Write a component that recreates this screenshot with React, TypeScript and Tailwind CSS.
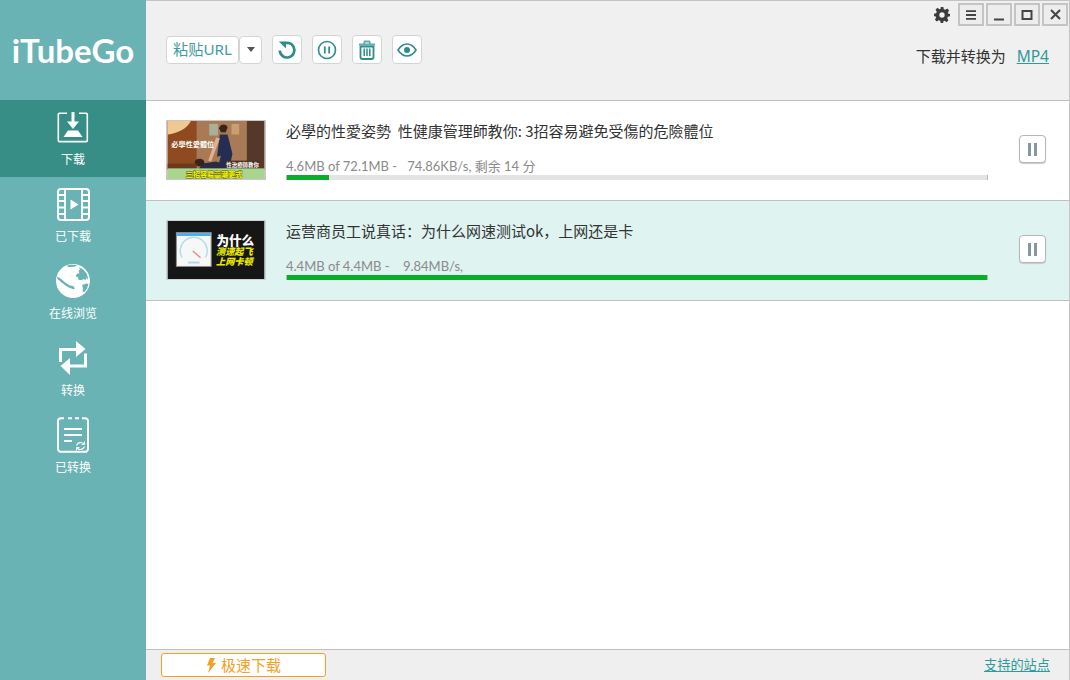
import React from "react";

const CJK = '"Noto Sans CJK SC", sans-serif';

function DownloadIcon() {
  return (
    <svg width="32" height="31" viewBox="0 0 32 31" fill="none">
      <path d="M10 1.200H2.500a1.200 1.200 0 0 0-1.200 1.200v26a1.200 1.200 0 0 0 1.200 1.200h26.600a1.200 1.200 0 0 0 1.200-1.200v-26a1.200 1.200 0 0 0-1.200-1.200H22" stroke="white" strokeWidth="1.600" />
      <path d="M14.500 0h3v9.500h4.500L16 17l-6-7.500h4.500z" fill="white" />
      <path d="M11 18.500h10l4.500 6.500h-19z" fill="white" />
    </svg>
  );
}

function FilmIcon() {
  return (
    <svg width="33" height="33" viewBox="0 0 33 33" fill="none">
      <rect x="1" y="1" width="31" height="31" rx="3" stroke="white" strokeWidth="2" />
      <path d="M8 1v31M25 1v31" stroke="white" strokeWidth="1.800" />
      <path d="M1 7h7M1 13h7M1 19.500h7M1 26h7M25 7h7M25 13h7M25 19.500h7M25 26h7" stroke="white" strokeWidth="1.800" />
      <path d="M13.500 11.500l8 5-8 5z" fill="white" />
    </svg>
  );
}

function GlobeIcon() {
  return (
    <svg width="34" height="34" viewBox="0 0 34 34">
      <circle cx="17" cy="17" r="17" fill="white" />
      <path d="M11 1.500l4-.8 6 .3-1.500 1.500-2.500.2-2 .3-2.500.3z" fill="#69b3b5" />
      <path d="M23 3.500l4 1.800 3.500 4 1.500 4.500-.5 2-1-2.500-.5 2.500-3-.5-1.500 1-3-.5-.5-2.500-2.500-1 1.500-2.500 2.500-.5-1-2.500 1.500-1z" fill="#69b3b5" />
      <path d="M.8 13l2.500.5 3 2.500 3.500 3 4 2.500 3.500.5 1.500 2.500-1 .8-4-1.300-4-2.300-4.500-3.500-3.500-3z" fill="#69b3b5" />
      <path d="M26 21l4.500-1.500 2 .5-1.500 4.500-2.500 3.500-2-.5.500-3.500z" fill="#69b3b5" />
    </svg>
  );
}

function ConvertIcon() {
  return (
    <svg width="28" height="36" viewBox="0 0 28 36" fill="none">
      <path d="M1.500 22V9.500h16" stroke="white" strokeWidth="3" />
      <path d="M17 1l9.500 8L17 17z" fill="white" />
      <path d="M26.500 13.500V26H10" stroke="white" strokeWidth="3" />
      <path d="M11 18L1.500 26l9.500 9z" fill="white" />
    </svg>
  );
}

function ConvertedIcon() {
  return (
    <svg width="32" height="36" viewBox="0 0 32 36" fill="none">
      <path d="M7 1.200H4a3 3 0 0 0-3 3v27.600a3 3 0 0 0 3 3h24a3 3 0 0 0 3-3V4.200a3 3 0 0 0-3-3h-3" stroke="white" strokeWidth="2" />
      <path d="M11 1.200h4M18 1.200h4" stroke="white" strokeWidth="2" />
      <path d="M7 12h18M7 18h18M7 24h8" stroke="white" strokeWidth="2" />
      <path d="M19.500 28.500a4.500 4.500 0 0 1 7.500-1.500M27.500 29.500a4.500 4.500 0 0 1-7.500 1.500" stroke="white" strokeWidth="1.100" />
      <path d="M27.500 24.500v3h-3M19.500 33.500v-3h3" stroke="white" strokeWidth="1" />
    </svg>
  );
}

function Nav({ label, active, children }: { label: string; active?: boolean; children: React.ReactNode }) {
  return (
    <div className={`flex h-[77px] flex-col items-center pt-[9px] ${active ? "bg-[#378e86]" : ""}`}>
      <div className="flex h-[36px] items-center justify-center">{children}</div>
      <div className="mt-[5px] text-[12px] leading-[18px] text-white" style={{ fontFamily: CJK }}>{label}</div>
    </div>
  );
}

function ToolButton({ children }: { children: React.ReactNode }) {
  return (
    <div className="flex h-[29px] w-[30px] items-center justify-center rounded-[4px] border border-[#d4d4d4] bg-white">
      {children}
    </div>
  );
}

function WinButton({ children }: { children: React.ReactNode }) {
  return (
    <div className="flex h-[23px] w-[26px] items-center justify-center border-2 border-[#c4c4c4] bg-[#ededed]">
      {children}
    </div>
  );
}

function Thumb1() {
  return (
    <svg width="100" height="60" viewBox="0 0 100 60" className="mb-[1px] shrink-0 border border-[#c8c8c8]">
      <rect width="100" height="60" fill="#8a5a34" />
      <rect width="30" height="50" fill="#8f4a20" />
      <path d="M0 0h24C20 8 10 13 0 14z" fill="#f0c890" />
      <rect x="30" width="52" height="50" fill="#a87a55" />
      <rect x="82" width="18" height="50" fill="#55382a" />
      <rect x="43" y="3" width="9" height="12" fill="#a8b09a" />
      <rect x="66" y="3" width="8" height="11" fill="#c8a070" />
      <circle cx="57" cy="8" r="4" fill="#e8b890" />
      <path d="M53 8c0-5 8-6 9-1l-2 5h-5z" fill="#3a2418" />
      <path d="M54 14h8l5 20-3 14H52l3-12-4 1z" fill="#232e52" />
      <path d="M54 18l-9 24-3-1 8-24z" fill="#e0b090" />
      <path d="M36 44l14-2 12 4v4H32z" fill="#2a2c44" />
      <ellipse cx="33" cy="43" rx="5" ry="4" fill="#33241e" />
      <rect y="44" width="30" height="6" fill="#6a3a1c" />
      <rect x="60" y="41" width="35" height="9" fill="#4a3020" />
      <text x="77.500" y="47.500" textAnchor="middle" fontSize="5.600" fontWeight="700" fill="#fff" fontFamily={CJK}>性治療師教你</text>
      <text x="26" y="26.500" textAnchor="middle" fontSize="7.400" fontWeight="700" fill="#fff" fontFamily={CJK}>必學性愛體位</text>
      <rect y="49" width="100" height="11" fill="#a9d68f" />
      <text x="48" y="58" textAnchor="middle" fontSize="7.300" fontWeight="900" fill="#eeec00" stroke="#5a5a10" strokeWidth="0.800" paintOrder="stroke" fontFamily={CJK}>三招容易高潮更式</text>
    </svg>
  );
}

function Thumb2() {
  return (
    <svg width="100" height="60" viewBox="0 0 100 60" className="mb-[1px] shrink-0 border border-[#c8d4d4]">
      <rect width="100" height="60" fill="#161616" />
      <rect x="9" y="12" width="36" height="35" fill="#f6f8f8" stroke="#8c8c8c" />
      <rect x="9.500" y="12.500" width="35" height="3" fill="#49b0e8" />
      <path d="M15 38a14 14 0 1 1 24 0" fill="none" stroke="#b5dde8" strokeWidth="1.500" />
      <path d="M26 31l8 7" stroke="#e88" strokeWidth="1.500" />
      <rect x="21" y="42" width="12" height="2" fill="#b5d5e8" />
      <text x="70" y="24.500" textAnchor="middle" fontSize="13" fontWeight="900" fill="#fff" fontFamily={CJK}>为什么</text>
      <text x="69" y="35" textAnchor="middle" fontSize="9.500" fontWeight="900" fontStyle="italic" fill="#e8e800" fontFamily={CJK}>测速起飞</text>
      <text x="69" y="46" textAnchor="middle" fontSize="9.500" fontWeight="900" fontStyle="italic" fill="#e8e800" fontFamily={CJK}>上网卡顿</text>
    </svg>
  );
}

function Row({ title, stats, pct, thumb, tint }: { title: string; stats: React.ReactNode; pct: string; thumb: React.ReactNode; tint?: boolean }) {
  return (
    <div className={`flex h-[100px] items-center border-b border-[#c0c0c0] pl-[20px] ${tint ? "bg-[#dff3f1]" : "bg-white"}`}>
      {thumb}
      <div className="ml-[20px] w-[702px]">
        <div className="whitespace-pre text-[15px] leading-[20px] text-[#333]" style={{ fontFamily: CJK }}>{title}</div>
        <div className="mt-[17px] whitespace-pre text-[13px] leading-[16px] text-[#8a8a8a]" style={{ fontFamily: 'Lato, "Noto Sans CJK SC", sans-serif' }}>{stats}</div>
        <div className="mt-[1px] flex h-[5px] border-x border-[#b8b8b8] bg-[#e4e4e4]">
          <div className="h-full bg-[#08ad29]" style={{ width: pct }} />
        </div>
      </div>
      <div className="ml-[31px] mb-[3px] flex h-[28px] w-[27px] items-center justify-center gap-[3px] rounded-[4px] border border-[#b4b8bc] bg-white shadow-[0_1px_1px_#c8c8c8]">
        <div className="h-[13px] w-[3px] bg-[#87979f]" />
        <div className="h-[13px] w-[3px] bg-[#87979f]" />
      </div>
    </div>
  );
}

export default function App() {
  return (
    <div className="flex h-[680px] w-[1070px] overflow-hidden bg-white">
      <aside className="w-[146px] shrink-0 bg-[#69b3b5]">
        <div className="flex h-[100px] items-center justify-center pt-[2px] text-[33px] font-bold text-white" style={{ fontFamily: 'Lato, sans-serif' }}>iTubeGo</div>
        <Nav label="下载" active><DownloadIcon /></Nav>
        <Nav label="已下载"><FilmIcon /></Nav>
        <Nav label="在线浏览"><GlobeIcon /></Nav>
        <Nav label="转换"><ConvertIcon /></Nav>
        <Nav label="已转换"><ConvertedIcon /></Nav>
      </aside>

      <main className="flex min-w-0 flex-1 flex-col border-t border-r border-[#c4c4c4]">
        <header className="flex h-[100px] shrink-0 flex-col border-b border-[#c0c0c0] bg-[#f0f0f0]">
          <div className="flex items-center justify-end gap-[2px] pt-[2px] pr-[1px]">
            <svg width="16" height="16" viewBox="0 0 24 24" className="mr-[6px]" fill="#3c3c3c">
              <path fillRule="evenodd" d="M10 0h4l.7 3.300 2.300 1 2.900-1.900 2.800 2.800-1.900 2.900 1 2.300L24 10v4l-3.200.7-1 2.300 1.900 2.900-2.800 2.800-2.900-1.900-2.300 1L14 24h-4l-.7-3.200-2.300-1-2.900 1.900-2.800-2.800L3.200 16l-1-2.300L0 14v-4l3.200-.7 1-2.300-1.900-2.900 2.800-2.800 2.900 1.900 2.300-1zM12 8a4 4 0 1 0 0 8 4 4 0 0 0 0-8z" />
            </svg>
            <WinButton>
              <svg width="12" height="10" viewBox="0 0 12 10" fill="none" stroke="#444" strokeWidth="1.800"><path d="M1 1.200h10M1 5h10M1 8.800h10" /></svg>
            </WinButton>
            <WinButton>
              <svg width="12" height="12" viewBox="0 0 12 12" fill="none" stroke="#444" strokeWidth="2"><path d="M1 10.500h10" /></svg>
            </WinButton>
            <WinButton>
              <svg width="12" height="10" viewBox="0 0 12 10" fill="none" stroke="#444" strokeWidth="2"><rect x="1.500" y="1" width="9" height="8" /></svg>
            </WinButton>
            <WinButton>
              <svg width="11" height="11" viewBox="0 0 11 11" fill="none" stroke="#444" strokeWidth="2"><path d="M1 1l9 9M10 1l-9 9" /></svg>
            </WinButton>
          </div>
          <div className="mt-[9px] flex h-[29px] items-center pl-[20px] pr-[20px]">
            <div className="flex h-[28px] w-[73px] items-center justify-center rounded-[4px] border border-[#d4d4d4] bg-white text-[15.200px] text-[#3f9ba3]" style={{ fontFamily: '"Noto Sans", "Noto Sans CJK SC", sans-serif' }}>粘贴URL</div>
            <div className="flex h-[28px] w-[23px] items-center justify-center rounded-[4px] border border-[#d4d4d4] bg-white">
              <svg width="8" height="5" viewBox="0 0 8 5"><path d="M0 0h8L4 5z" fill="#555" /></svg>
            </div>
            <div className="ml-[10px] flex gap-[10px]">
              <ToolButton>
                <svg width="20" height="20" viewBox="0 0 20 20" fill="none">
                  <path d="M5.500 4.500A7.300 7.300 0 1 1 2.800 10.500" stroke="#2f8d88" strokeWidth="2.700" />
                  <path d="M1.800 1.500h7.200V8.500z" fill="#2f8d88" />
                </svg>
              </ToolButton>
              <ToolButton>
                <svg width="20" height="20" viewBox="0 0 20 20" fill="none">
                  <circle cx="10" cy="10" r="8.500" stroke="#2f8d88" strokeWidth="1.600" />
                  <path d="M7.800 6.500v7M12.200 6.500v7" stroke="#2f8d88" strokeWidth="1.800" />
                </svg>
              </ToolButton>
              <ToolButton>
                <svg width="18" height="20" viewBox="0 0 18 20" fill="none">
                  <path d="M1 4.500h16M6 4l.6-2.500h4.800L12 4" stroke="#62b0ae" strokeWidth="1.800" />
                  <path d="M2.500 6.500V17a2 2 0 0 0 2 2h9a2 2 0 0 0 2-2V6.500z" stroke="#2f8d88" strokeWidth="1.800" />
                  <path d="M6.200 8.500V16M9 8.500V16M11.800 8.500V16" stroke="#2f8d88" strokeWidth="1.500" />
                </svg>
              </ToolButton>
              <ToolButton>
                <svg width="20" height="14" viewBox="0 0 20 14" fill="none">
                  <path d="M1 7c2.500-4 5.500-6 9-6s6.500 2 9 6c-2.500 4-5.500 6-9 6s-6.500-2-9-6z" stroke="#2f8d88" strokeWidth="1.600" />
                  <circle cx="10" cy="7" r="3" fill="#2f8d88" />
                </svg>
              </ToolButton>
            </div>
            <div className="ml-auto flex items-center self-start pt-[10px] text-[15px] leading-[22px] text-[#333]" style={{ fontFamily: CJK }}>
              <span>下载并转换为</span>
              <span className="ml-[11px] text-[15.500px] text-[#2f9a9a] underline" style={{ fontFamily: '"Noto Sans", sans-serif' }}>MP4</span>
            </div>
          </div>
        </header>

        <div className="flex-1 bg-white">
          <Row
            title="必學的性愛姿勢  性健康管理師教你: 3招容易避免受傷的危險體位"
            stats="4.6MB of 72.1MB -   74.86KB/s, 剩余 14 分"
            pct="6%"
            thumb={<Thumb1 />}
          />
          <Row
            tint
            title="运营商员工说真话：为什么网速测试ok，上网还是卡"
            stats="4.4MB of 4.4MB -    9.84MB/s,"
            pct="100%"
            thumb={<Thumb2 />}
          />
        </div>

        <footer className="flex h-[31px] shrink-0 items-center justify-between border-t border-[#c0c0c0] bg-[#efefef] pl-[15px] pr-[19px]">
          <div className="flex h-[24px] w-[165px] items-center justify-center gap-[5px] rounded-[3px] border border-[#f5a021] bg-white text-[15px] text-[#f5a021]" style={{ fontFamily: CJK }}>
            <svg width="10" height="15" viewBox="0 0 10 15"><path d="M4 0h5L6.500 5H10L2 15l2-7.500H1z" fill="#f5a021" /></svg>
            <span>极速下载</span>
          </div>
          <span className="text-[13.200px] text-[#2f9a9a] underline" style={{ fontFamily: CJK }}>支持的站点</span>
        </footer>
      </main>
    </div>
  );
}
